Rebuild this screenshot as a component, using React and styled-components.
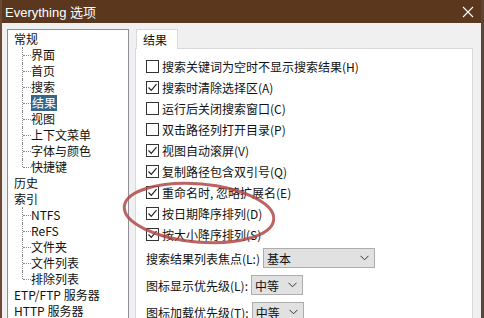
import React from 'react'
import styled, { createGlobalStyle, css } from 'styled-components'

const Global = createGlobalStyle`
  html, body { margin: 0; padding: 0; background: #f0f0f0; }
  body { font-family: "Noto Sans CJK SC", "Noto Sans", sans-serif; }
`

const Window = styled.div`
  position: relative;
  width: 484px;
  height: 318px;
  overflow: hidden;
  background: #f0f0f0;
  box-sizing: border-box;
  border-left: 2px solid #6a4a33;
  border-right: 3px solid #5a4636;
`

const TitleBar = styled.div`
  height: 23px;
  margin: 0 -3px 0 -2px;
  background: #5a371d;
  color: #fff;
  display: flex;
  align-items: center;
  justify-content: space-between;
  padding: 0 10px 0 5px;
  font-family: "Liberation Sans", "Noto Sans CJK SC", sans-serif;
  font-size: 13px;
`

const Body = styled.div`
  display: flex;
  align-items: flex-start;
  padding: 6px 8px 0 5px;
`

const Tree = styled.div`
  width: 120px;
  height: 300px;
  background: #fff;
  border: 1px solid #8c8f96;
  padding-top: 1px;
  font-size: 12px;
`

const Node = styled.div`
  height: 16px;
  line-height: 16px;
  padding-left: 6px;
  white-space: nowrap;
  color: #111;
`

const Child = styled.div`
  position: relative;
  height: 16px;
  line-height: 16px;
  padding-left: 23px;
  white-space: nowrap;
  color: #111;
  &::before {
    content: '';
    position: absolute;
    left: 14px;
    top: 0;
    height: ${p => (p.$last ? '8px' : '16px')};
    border-left: 1px dotted #888;
  }
  &::after {
    content: '';
    position: absolute;
    left: 15px;
    top: 8px;
    width: 8px;
    border-top: 1px dotted #888;
  }
`

const Label = styled.span`
  display: inline-block;
  padding: 0 1px;
  ${p => p.$selected && css`
    background: #34678b;
    color: #fff;
  `}
`

const Right = styled.div`
  margin-left: 6px;
  flex: 1;
  display: flex;
  flex-direction: column;
`

const Tabs = styled.div`
  display: flex;
  margin-left: 1px;
`

const Tab = styled.div`
  width: 42px;
  height: 20px;
  box-sizing: border-box;
  background: #fff;
  border: 1px solid #d9d9d9;
  border-bottom: none;
  font-size: 12px;
  line-height: 20px;
  padding-left: 6px;
  color: #111;
  position: relative;
  margin-bottom: -1px;
  z-index: 1;
`

const Panel = styled.div`
  background: #fff;
  border: 1px solid #d9d9d9;
  height: 300px;
  padding: 7px 0 0 10px;
  font-size: 12px;
  color: #111;
`

const CheckRow = styled.div`
  display: flex;
  align-items: center;
  height: 21px;
  gap: 3px;
`

const Box = styled.span`
  width: 13px;
  height: 13px;
  box-sizing: border-box;
  border: 1px solid #333;
  background: #fff;
  display: inline-flex;
  align-items: center;
  justify-content: center;
`

const SelectRow = styled.div`
  display: flex;
  align-items: center;
  height: 20px;
  margin-top: ${p => p.$first ? '3px' : '7px'};
`

const Select = styled.div`
  width: ${p => p.$w}px;
  height: 20px;
  box-sizing: border-box;
  margin-left: 3px;
  background: #e1e1e1;
  border: 1px solid #adadad;
  display: flex;
  align-items: center;
  justify-content: space-between;
  padding: 0 5px 0 3px;
  font-size: 12px;
`

const Annotation = styled.svg`
  position: absolute;
  left: 0;
  top: 0;
  pointer-events: none;
`

const Check = ({ on }) => (
  <Box>
    {on && (
      <svg width="11" height="11" viewBox="0 0 11 11">
        <path d="M1.5 5.5 L4.3 8.3 L9.5 2.2" fill="none" stroke="#222" strokeWidth="1.2" />
      </svg>
    )}
  </Box>
)

const Chevron = () => (
  <svg width="9" height="6" viewBox="0 0 9 6">
    <path d="M0.5 0.8 L4.5 4.8 L8.5 0.8" fill="none" stroke="#333" strokeWidth="1" />
  </svg>
)

const checks = [
  ['搜索关键词为空时不显示搜索结果(H)', false],
  ['搜索时清除选择区(A)', true],
  ['运行后关闭搜索窗口(C)', false],
  ['双击路径列打开目录(P)', false],
  ['视图自动滚屏(V)', true],
  ['复制路径包含双引号(Q)', true],
  ['重命名时, 忽略扩展名(E)', true],
  ['按日期降序排列(D)', true],
  ['按大小降序排列(S)', true],
]

export default function App() {
  return (
    <Window>
      <Global />
      <TitleBar>
        <span>Everything 选项</span>
        <svg width="12" height="12" viewBox="0 0 12 12">
          <path d="M1 1 L11 11 M11 1 L1 11" stroke="#fff" strokeWidth="1.1" />
        </svg>
      </TitleBar>
      <Body>
        <Tree>
          <Node>常规</Node>
          <Child>界面</Child>
          <Child>首页</Child>
          <Child>搜索</Child>
          <Child><Label $selected>结果</Label></Child>
          <Child>视图</Child>
          <Child>上下文菜单</Child>
          <Child>字体与颜色</Child>
          <Child $last>快捷键</Child>
          <Node>历史</Node>
          <Node>索引</Node>
          <Child>NTFS</Child>
          <Child>ReFS</Child>
          <Child>文件夹</Child>
          <Child>文件列表</Child>
          <Child $last>排除列表</Child>
          <Node>ETP/FTP 服务器</Node>
          <Node>HTTP 服务器</Node>
        </Tree>
        <Right>
          <Tabs>
            <Tab>结果</Tab>
          </Tabs>
          <Panel>
            {checks.map(([text, on]) => (
              <CheckRow key={text}>
                <Check on={on} />
                <span>{text}</span>
              </CheckRow>
            ))}
            <SelectRow $first>
              <span>搜索结果列表焦点(L:)</span>
              <Select $w={112}>基本<Chevron /></Select>
            </SelectRow>
            <SelectRow>
              <span>图标显示优先级(L):</span>
              <Select $w={52}>中等<Chevron /></Select>
            </SelectRow>
            <SelectRow>
              <span>图标加载优先级(T):</span>
              <Select $w={52}>中等<Chevron /></Select>
            </SelectRow>
          </Panel>
        </Right>
      </Body>
      <Annotation width="484" height="318">
        <ellipse cx="197" cy="213" rx="75" ry="29" transform="rotate(5 197 213)"
          fill="none" stroke="#b04848" strokeOpacity="0.85" strokeWidth="3" />
      </Annotation>
    </Window>
  )
}
